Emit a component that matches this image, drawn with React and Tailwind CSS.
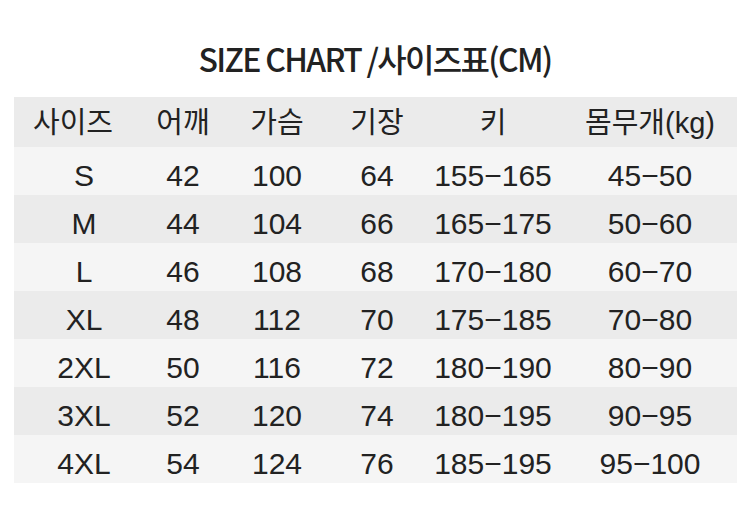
const headers = ["사이즈", "어깨", "가슴", "기장", "키", "몸무개(kg)"];

const rows = [
  ["S", "42", "100", "64", "155−165", "45−50"],
  ["M", "44", "104", "66", "165−175", "50−60"],
  ["L", "46", "108", "68", "170−180", "60−70"],
  ["XL", "48", "112", "70", "175−185", "70−80"],
  ["2XL", "50", "116", "72", "180−190", "80−90"],
  ["3XL", "52", "120", "74", "180−195", "90−95"],
  ["4XL", "54", "124", "76", "185−195", "95−100"],
];

const cols = "grid grid-cols-[129px_80px_108px_92px_140px_174px]";

export default function App() {
  return (
    <div
      className="w-[750px] h-[521px] bg-white text-[#222] overflow-hidden"
      style={{ fontFamily: '"Liberation Sans", "Noto Sans CJK KR", sans-serif' }}
    >
      <div className="h-[97px] pt-[42px] text-center">
        <h1
          className="text-[32px] font-medium tracking-[-1.7px] leading-none"
          style={{ fontFamily: '"Noto Sans CJK KR", sans-serif' }}
        >
          SIZE CHART /사이즈표(CM)
        </h1>
      </div>

      <div className="mx-[14px] w-[723px]">
        <div className={`${cols} h-[50px] pt-[2px] bg-[#ebebeb] items-center text-[29px] leading-none`}>
          {headers.map((h, i) => (
            <div
              key={h}
              className={`text-center whitespace-nowrap ${i === 0 ? "pr-[11px]" : ""}`}
            >
              {h}
            </div>
          ))}
        </div>
        {rows.map((r, ri) => (
          <div
            key={r[0]}
            className={`${cols} h-[48px] pt-[9px] items-center text-[30px] leading-none ${
              ri % 2 === 0 ? "bg-[#f5f5f5]" : "bg-[#ebebeb]"
            }`}
          >
            {r.map((c, ci) => (
              <div
                key={ci}
                className={`text-center whitespace-nowrap ${ci === 0 ? "pl-[11px]" : ""}`}
              >
                {c}
              </div>
            ))}
          </div>
        ))}
      </div>
    </div>
  );
}
